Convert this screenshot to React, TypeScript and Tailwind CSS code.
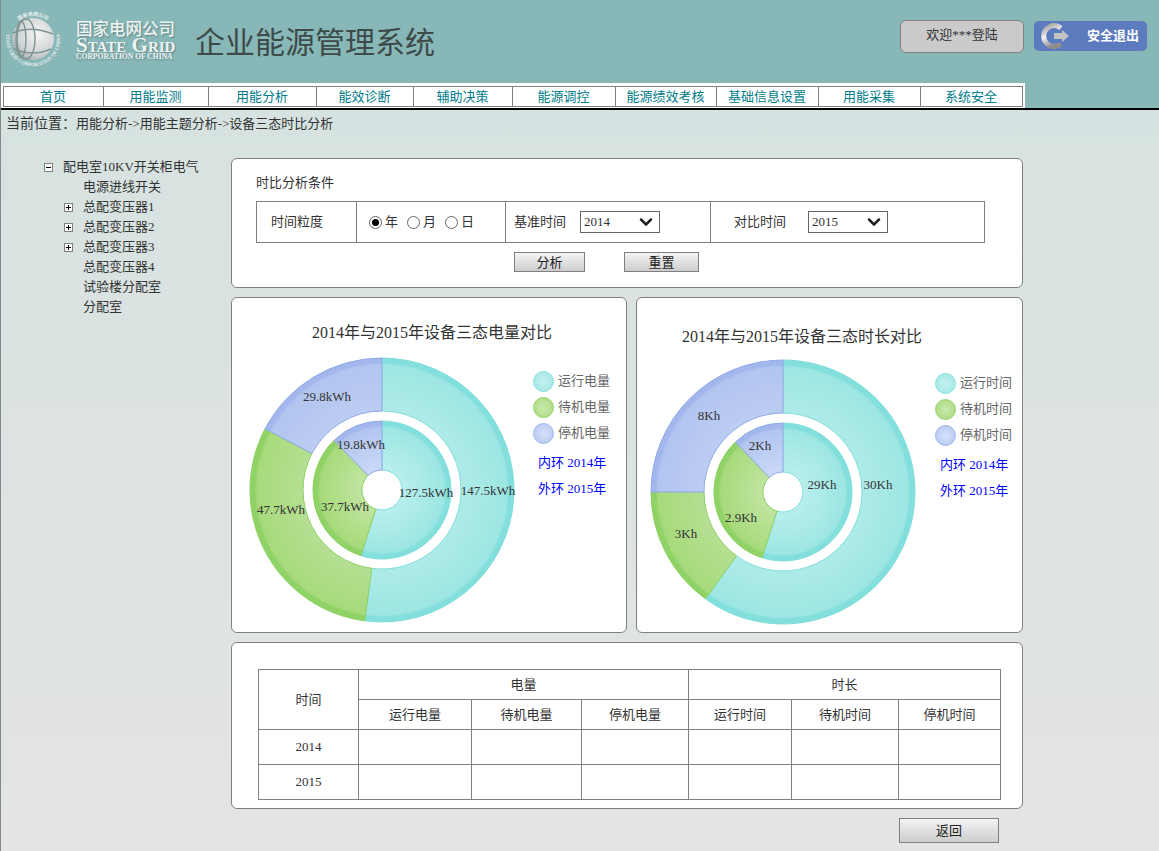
import { ChevronDown } from 'lucide-react';

const navItems = [
  { label: '首页', w: 'w-[100px]' },
  { label: '用能监测', w: 'w-[105px]' },
  { label: '用能分析', w: 'w-[108px]' },
  { label: '能效诊断', w: 'w-[97px]' },
  { label: '辅助决策', w: 'w-[99px]' },
  { label: '能源调控', w: 'w-[103px]' },
  { label: '能源绩效考核', w: 'w-[101px]' },
  { label: '基础信息设置', w: 'w-[102px]' },
  { label: '用能采集', w: 'w-[102px]' },
  { label: '系统安全', w: 'flex-1' },
];

const treeItems = [
  { label: '电源进线开关', toggle: false },
  { label: '总配变压器1', toggle: true },
  { label: '总配变压器2', toggle: true },
  { label: '总配变压器3', toggle: true },
  { label: '总配变压器4', toggle: false },
  { label: '试验楼分配室', toggle: false },
  { label: '分配室', toggle: false },
];

const CX = 140;
const CY = 140;

const point = (r: number, deg: number) => {
  const a = (deg * Math.PI) / 180;
  return `${(CX + r * Math.sin(a)).toFixed(2)} ${(CY - r * Math.cos(a)).toFixed(2)}`;
};

const slice = (r0: number, r1: number, from: number, to: number) => {
  const large = to - from > 180 ? 1 : 0;
  return `M${point(r1, from)} A${r1} ${r1} 0 ${large} 1 ${point(r1, to)} L${point(r0, to)} A${r0} ${r0} 0 ${large} 0 ${point(r0, from)} Z`;
};

const palette = [
  { key: 'c', line: '#80dedb', band: '#82dfdc', mid: '#9de6e3', light: '#aeebe8', core: '#b9efed' },
  { key: 'g', line: '#8ed163', band: '#8fd265', mid: '#a8da7c', light: '#b5df92', core: '#c0e5a0' },
  { key: 'b', line: '#8fa9e8', band: '#a2b8ed', mid: '#b2c5f0', light: '#bccdf2', core: '#cbd9f8' },
];

type Label = { text: string; x: number; y: number };

const Donut = ({ id, outer, inner, labels }: { id: string; outer: number[]; inner: number[]; labels: Label[] }) => (
  <svg width="280" height="280" viewBox="0 0 280 280" className="shrink-0 overflow-visible">
    <defs>
      {palette.map((p) => (
        <radialGradient key={p.key} id={`${id}-o-${p.key}`} gradientUnits="userSpaceOnUse" cx={CX} cy={CY} r="132">
          <stop offset="0.6" stopColor={p.light} />
          <stop offset="0.945" stopColor={p.mid} />
          <stop offset="0.965" stopColor={p.band} />
          <stop offset="1" stopColor={p.band} />
        </radialGradient>
      ))}
      {palette.map((p) => (
        <radialGradient key={p.key} id={`${id}-i-${p.key}`} gradientUnits="userSpaceOnUse" cx={CX} cy={CY} r="69">
          <stop offset="0.28" stopColor={p.core} />
          <stop offset="0.9" stopColor={p.mid} />
          <stop offset="0.94" stopColor={p.band} />
          <stop offset="1" stopColor={p.band} />
        </radialGradient>
      ))}
    </defs>
    {palette.map((p, i) => (
      <path key={p.key} d={slice(79, 132, outer[i], outer[i + 1])} fill={`url(#${id}-o-${p.key})`} stroke={p.line} strokeWidth="1" />
    ))}
    {palette.map((p, i) => (
      <path key={p.key} d={slice(20, 69, inner[i], inner[i + 1])} fill={`url(#${id}-i-${p.key})`} stroke={p.line} strokeWidth="1" />
    ))}
    {labels.map((l) => (
      <text key={l.text} x={l.x} y={l.y} textAnchor="middle" dominantBaseline="central" fontSize="13" fill="#333333">
        {l.text}
      </text>
    ))}
  </svg>
);

const legendDots = [
  'border-[#86e0dd] from-[#c4f1ef] to-[#9de6e3]',
  'border-[#92d36a] from-[#cbe9ae] to-[#a5d97a]',
  'border-[#9db4ec] from-[#d6e1fa] to-[#b2c5f0]',
];

const Legend = ({ names }: { names: string[] }) => (
  <div className="flex flex-col">
    {names.map((n, i) => (
      <div key={n} className="flex h-[26px] items-center gap-[4px]">
        <span className={`h-[21px] w-[21px] rounded-full border bg-radial ${legendDots[i]}`} />
        <span className="text-[13px] text-[#666666]">{n}</span>
      </div>
    ))}
    <div className="mt-[4px] flex h-[26px] items-center pl-[5px] text-[13px] text-[#0000ff]">内环 2014年</div>
    <div className="flex h-[26px] items-center pl-[5px] text-[13px] text-[#0000ff]">外环 2015年</div>
  </div>
);

const Radio = ({ label, checked }: { label: string; checked?: boolean }) => (
  <span className="flex items-center gap-[3px]">
    <span className="flex h-[13px] w-[13px] items-center justify-center rounded-full border border-[#666666] bg-white">
      {checked && <span className="h-[7px] w-[7px] rounded-full bg-black" />}
    </span>
    {label}
  </span>
);

const FakeSelect = ({ value }: { value: string }) => (
  <div className="flex h-[22px] w-[80px] items-center justify-between border border-[#666666] bg-white pr-[3px] pl-[3px] text-[13px]">
    {value}
    <ChevronDown size={20} strokeWidth={3} color="#222222" />
  </div>
);

const GrayButton = ({ label, w, h }: { label: string; w: string; h: string }) => (
  <button className={`${w} ${h} border border-[#808080] bg-linear-to-b from-[#f4f4f4] to-[#cdcdcd] text-[13px] text-[#222222]`}>
    {label}
  </button>
);

const TreeToggle = ({ open }: { open?: boolean }) => (
  <span className="relative block h-[9px] w-[9px] border border-[#808080] bg-white">
    <span className="absolute top-[3px] left-[1px] h-px w-[5px] bg-black" />
    {!open && <span className="absolute top-[1px] left-[3px] h-[5px] w-px bg-black" />}
  </span>
);

const Logo = () => (
  <div className="flex items-center">
    <svg width="64" height="64" viewBox="0 0 64 64" className="shrink-0">
      <defs>
        <radialGradient id="globe" cx="0.62" cy="0.38" r="0.8">
          <stop offset="0" stopColor="#f5f5f5" />
          <stop offset="0.6" stopColor="#cfd3d3" />
          <stop offset="1" stopColor="#8f9c9c" />
        </radialGradient>
        <path id="logo-top" d="M12 20 A23.5 23.5 0 0 1 52 20" />
        <path id="logo-bottom" d="M7 22 A27 27 0 1 0 57 22" />
      </defs>
      <circle cx="32" cy="32" r="21" fill="url(#globe)" />
      <g fill="none" stroke="#7f9494" strokeWidth="1.4">
        <ellipse cx="25" cy="32" rx="9" ry="20" />
        <ellipse cx="20" cy="32" rx="5" ry="18" />
        <path d="M12 26 Q30 18 52 27" />
        <path d="M13 42 Q32 50 50 42" />
      </g>
      <text fontSize="5" fontWeight="700" fill="#e8eeee" textAnchor="middle">
        <textPath href="#logo-top" startOffset="50%">国家电网公司</textPath>
      </text>
      <text fontSize="5" fontWeight="700" fill="#e8eeee" textAnchor="middle">
        <textPath href="#logo-bottom" startOffset="50%">STATE GRID CORPORATION OF CHINA</textPath>
      </text>
    </svg>
    <div className="ml-[11px] flex w-[100px] flex-col text-[#eef3f2] [text-shadow:1px_1px_2px_#5f8585]">
      <span className="h-[19px] font-['Noto_Sans_CJK_SC',sans-serif] text-[16.5px] leading-[19px] font-medium whitespace-nowrap">国家电网公司</span>
      <span className="h-[14px] text-[21px] leading-[14px] font-bold whitespace-nowrap [font-variant:small-caps]">State Grid</span>
      <span className="mt-[1px] text-[7.6px] leading-[7px] font-bold whitespace-nowrap">CORPORATION OF CHINA</span>
    </div>
  </div>
);

const LogoutIcon = () => (
  <svg width="30" height="28" viewBox="0 0 30 28" className="shrink-0">
    <defs>
      <linearGradient id="ring" x1="0" y1="0" x2="0.4" y2="1">
        <stop offset="0" stopColor="#9a9a9a" />
        <stop offset="0.5" stopColor="#f2f2f2" />
        <stop offset="1" stopColor="#8e8e8e" />
      </linearGradient>
    </defs>
    <path d="M21 6 A10.5 10.5 0 1 0 21 22" fill="none" stroke="url(#ring)" strokeWidth="5" />
    <path d="M14 11 H22 V8 L29 14 L22 20 V17 H14 Z" fill="#c4c4c4" />
  </svg>
);

export default function App() {
  return (
    <div className="flex h-[851px] w-[1159px] flex-col overflow-hidden border-l border-[#808a8a] bg-linear-to-b from-[#d4e2e0] to-[#e4e4e4] font-['Liberation_Serif','Noto_Sans_CJK_SC',serif] text-[13px] text-[#333333]">
      {/* header */}
      <header className="h-[110px] shrink-0 border-b-2 border-black bg-[#88b7b7]">
        <div className="flex h-[83px] items-start">
          <div className="mt-[7px]">
            <Logo />
          </div>
          <h1 className="mt-[21px] ml-[19px] text-[30px] leading-[44px] font-normal text-[#3d4a4a]">企业能源管理系统</h1>
          <div className="mt-[20px] ml-auto flex items-start gap-[10px] pr-[12px]">
            <div className="flex h-[33px] w-[124px] items-center justify-center rounded-[6px] border border-[#808080] bg-[#cacaca] pb-[3px] text-[13px] text-[#333333]">
              欢迎***登陆
            </div>
            <div className="mt-[1px] flex h-[30px] w-[113px] items-center rounded-[5px] bg-[#5c7bbf] pl-[6px] font-['Liberation_Sans','Noto_Sans_CJK_SC',sans-serif] text-[13px] font-bold text-white">
              <LogoutIcon />
              <span className="ml-[17px] whitespace-nowrap">安全退出</span>
            </div>
          </div>
        </div>
        <div className="h-[25px] w-[1024px] bg-white pt-[3px] pl-[2px]">
          <nav className="flex h-[21px] w-[1020px] border border-[#808080] font-['Liberation_Sans','Noto_Sans_CJK_SC',sans-serif] text-[13px] text-[#007c8a]">
            {navItems.map((n, i) => (
              <div key={n.label} className={`${n.w} flex items-center justify-center pr-[1px] whitespace-nowrap ${i < navItems.length - 1 ? 'border-r border-[#808080]' : ''}`}>
                {n.label}
              </div>
            ))}
          </nav>
        </div>
      </header>

      {/* breadcrumb */}
      <div className="h-[47px] shrink-0 pt-[4px] pl-[5px] leading-[20px] whitespace-nowrap">
        <span className="text-[14px]">当前位置：</span>
        <span className="text-[13px]">用能分析-&gt;用能主题分析-&gt;设备三态时比分析</span>
      </div>

      <div className="flex min-h-0 flex-1 items-start">
        {/* tree */}
        <aside className="w-[230px] shrink-0 pl-[43px] leading-[20px]">
          <div className="flex h-[20px] items-center gap-[10px]">
            <TreeToggle open />
            <span>配电室10KV开关柜电气</span>
          </div>
          {treeItems.map((t) => (
            <div key={t.label} className="flex h-[20px] items-center pl-[20px]">
              <span className="w-[19px] shrink-0">{t.toggle && <TreeToggle />}</span>
              <span>{t.label}</span>
            </div>
          ))}
        </aside>

        <main className="flex w-[792px] shrink-0 flex-col pt-px">
          {/* conditions */}
          <section className="h-[130px] rounded-[6px] border border-[#808080] bg-white pt-[14px] pl-[24px]">
            <div className="h-[20px] leading-[20px]">时比分析条件</div>
            <div className="mt-[8px] flex h-[42px] w-[729px] items-stretch border border-[#808080]">
              <div className="flex w-[100px] items-center border-r border-[#808080] pl-[14px]">时间粒度</div>
              <div className="flex w-[149px] items-center gap-[9px] border-r border-[#808080] pl-[12px]">
                <Radio label="年" checked />
                <Radio label="月" />
                <Radio label="日" />
              </div>
              <div className="flex w-[205px] items-center border-r border-[#808080] pl-[8px]">
                <span className="w-[66px]">基准时间</span>
                <FakeSelect value="2014" />
              </div>
              <div className="flex flex-1 items-center pl-[23px]">
                <span className="w-[74px]">对比时间</span>
                <FakeSelect value="2015" />
              </div>
            </div>
            <div className="mt-[9px] flex pl-[258px]">
              <GrayButton label="分析" w="w-[71px]" h="h-[20px]" />
              <div className="w-[39px]" />
              <GrayButton label="重置" w="w-[75px]" h="h-[20px]" />
            </div>
          </section>

          {/* charts */}
          <div className="mt-[9px] flex gap-[9px]">
            <section className="h-[336px] w-[396px] rounded-[6px] border border-[#808080] bg-white pt-[23px]">
              <h2 className="pl-[80px] text-[16px] leading-[24px] font-normal whitespace-nowrap">2014年与2015年设备三态电量对比</h2>
              <div className="mt-[5px] flex pl-[10px]">
                <Donut
                  id="power"
                  outer={[0, 187.5, 297.6, 360]}
                  inner={[0, 197.8, 316, 360]}
                  labels={[
                    { text: '29.8kWh', x: 85, y: 46 },
                    { text: '19.8kWh', x: 119, y: 94 },
                    { text: '127.5kWh', x: 184, y: 142 },
                    { text: '147.5kWh', x: 246, y: 140 },
                    { text: '47.7kWh', x: 39, y: 159 },
                    { text: '37.7kWh', x: 103, y: 156 },
                  ]}
                />
                <div className="mt-[18px] ml-[11px]">
                  <Legend names={['运行电量', '待机电量', '停机电量']} />
                </div>
              </div>
            </section>
            <section className="h-[336px] w-[387px] rounded-[6px] border border-[#808080] bg-white pt-[27px]">
              <h2 className="pl-[45px] text-[16px] leading-[24px] font-normal whitespace-nowrap">2014年与2015年设备三态时长对比</h2>
              <div className="mt-[3px] flex pl-[6px]">
                <Donut
                  id="time"
                  outer={[0, 216, 270, 360]}
                  inner={[0, 197.6, 316.4, 360]}
                  labels={[
                    { text: '8Kh', x: 66, y: 63 },
                    { text: '2Kh', x: 117, y: 93 },
                    { text: '29Kh', x: 179, y: 132 },
                    { text: '30Kh', x: 235, y: 132 },
                    { text: '3Kh', x: 43, y: 181 },
                    { text: '2.9Kh', x: 98, y: 165 },
                  ]}
                />
                <div className="mt-[18px] ml-[12px]">
                  <Legend names={['运行时间', '待机时间', '停机时间']} />
                </div>
              </div>
            </section>
          </div>

          {/* summary table */}
          <section className="mt-[9px] h-[167px] rounded-[6px] border border-[#808080] bg-white pt-[26px] pl-[26px]">
            <table className="w-[742px] table-fixed border-collapse text-center">
              <colgroup>
                <col className="w-[100px]" />
                <col className="w-[113px]" />
                <col className="w-[110px]" />
                <col className="w-[107px]" />
                <col className="w-[103px]" />
                <col className="w-[107px]" />
                <col className="w-[102px]" />
              </colgroup>
              <tbody>
                <tr className="h-[30px]">
                  <td rowSpan={2} className="border border-[#808080]">时间</td>
                  <td colSpan={3} className="border border-[#808080]">电量</td>
                  <td colSpan={3} className="border border-[#808080]">时长</td>
                </tr>
                <tr className="h-[30px]">
                  {['运行电量', '待机电量', '停机电量', '运行时间', '待机时间', '停机时间'].map((h) => (
                    <td key={h} className="border border-[#808080]">{h}</td>
                  ))}
                </tr>
                {['2014', '2015'].map((y) => (
                  <tr key={y} className="h-[35px]">
                    <td className="border border-[#808080]">{y}</td>
                    {[0, 1, 2, 3, 4, 5].map((c) => (
                      <td key={c} className="border border-[#808080]" />
                    ))}
                  </tr>
                ))}
              </tbody>
            </table>
          </section>

          <div className="mt-[9px] flex justify-end pr-[24px]">
            <GrayButton label="返回" w="w-[100px]" h="h-[25px]" />
          </div>
        </main>
      </div>
    </div>
  );
}
